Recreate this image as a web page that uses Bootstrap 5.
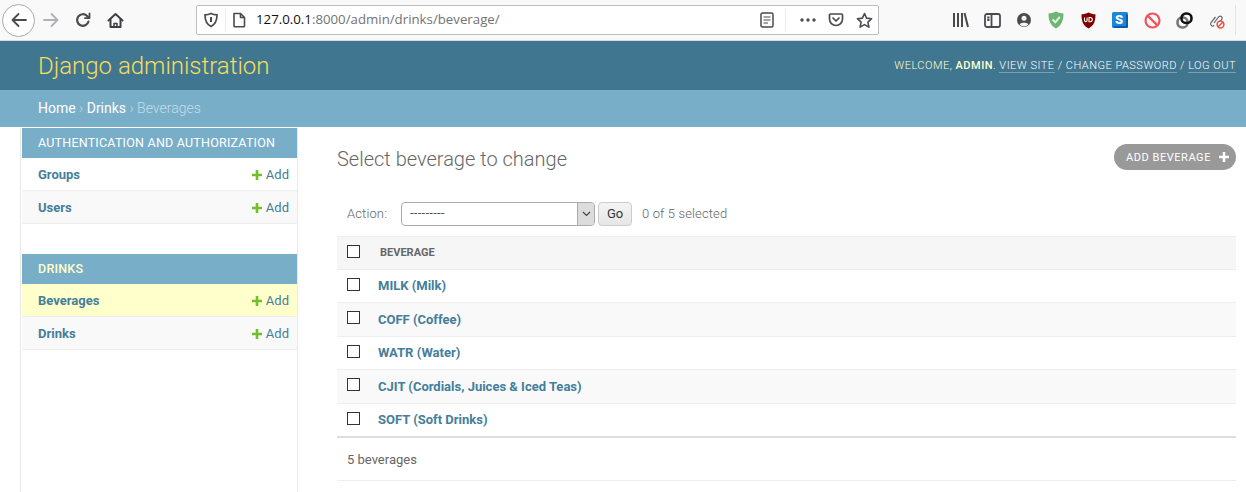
<!DOCTYPE html>
<html lang="en">
<head>
    <meta charset="UTF-8">
    <meta name="viewport" content="width=device-width, initial-scale=1.0">
    <title>Select beverage to change | Django site admin</title>
    <link href="https://cdn.jsdelivr.net/npm/bootstrap@5.3.0/dist/css/bootstrap.min.css" rel="stylesheet">
    <style>
        html, body { height: 100%; }
        body {
            font-family: Roboto, "Liberation Sans", sans-serif;
            font-size: 14px;
            color: #333;
            background: #fff;
            overflow: hidden;
        }
        a { text-decoration: none; color: #447e9b; }

        /* browser chrome */
        .browser-bar { height: 41px; background: #f9f9fa; border-bottom: 1px solid #d8d8da; padding-left: 2px; }
        .tool-slot { width: 32px; height: 32px; flex: none; }
        .back-ring { width: 33px; height: 33px; border: 1px solid #a9a9ab; border-radius: 50%; background: #fff; }
        .url-box {
            width: 683px; height: 30px; margin-left: 65px; background: #fff;
            border: 1px solid #bdbdbf; border-radius: 2px; font-family: "Open Sans", sans-serif;
            font-size: 13.25px; color: #737373;
        }
        .url-box b { font-weight: 400; color: #111; }
        .url-text { margin-left: 4px; }
        .url-sep { width: 1px; height: 22px; background: #ececee; flex: none; }
        .url-slot { width: 28px; height: 28px; flex: none; }
        .page-slot { width: 26px; }
        .url-sep-end { margin: 0 8px 0 4px; }
        .ext-strip { margin-left: 65px; }
        .ext-end { width: 1px; height: 30px; background: #e4e4e6; margin-left: 3px; }

        /* django header */
        .site-head { height: 49px; background: #417690; padding: 0 10px 0 38px; }
        .site-name { font-size: 24px; font-weight: 300; color: #f5dd5d; }
        .user-tools { font-size: 11px; letter-spacing: .5px; color: #ffc; text-transform: uppercase; font-weight: 300; padding-top: 1px; }
        .user-tools strong { font-weight: 500; }
        .user-tools a { color: #fff; border-bottom: 1px solid rgba(255,255,255,.3); font-weight: 300; }
        .crumb-bar { height: 38px; background: #79aec8; padding-left: 38px; font-size: 14px; font-weight: 300; color: #c4dce8; border-bottom: 1px solid #fff; }
        .crumb-bar a { color: #fff; font-weight: 400; }

        /* sidebar */
        .main-wrap { height: calc(100% - 128px); }
        .side-nav { width: 278px; margin-left: 20px; flex: none; border-left: 1px solid #eaeaea; border-right: 1px solid #eaeaea; padding-left: 1px; }
        .mod-head { height: 30px; background: #79aec8; color: #fff; font-size: 12.5px; letter-spacing: .22px; padding-left: 16px; font-weight: 400; }
        .mod-gap { margin-top: 30px; }
        .mod-head-tall { font-weight: 500; color: #ffc; }
        .mod-row { height: 33px; padding: 1px 8px 0 16px; border-bottom: 1px solid #eee; font-size: 13px; font-weight: 700; }
        .mod-row.alt { background: #f9f9f9; }
        .mod-row.current { background: #ffc; }
        .add-link { font-weight: 400; font-size: 13px; display: inline-flex; align-items: center; gap: 4px; }

        /* changelist */
        .change-pane { padding: 0 10px 0 39px; min-width: 0; }
        .title-row { height: 71px; padding-top: 16px; }
        .page-title { font-size: 20px; font-weight: 300; color: #666; margin: 0; line-height: 30px; }
        .add-pill {
            width: 122px; height: 26px; border-radius: 13px; background: #999; color: #fff;
            font-size: 11px; letter-spacing: .55px; padding-left: 12px;
        }
        .pill-label { padding-top: 3px; }
        .action-row { height: 34px; margin-top: 3px; padding-left: 10px; color: #666; font-size: 13px; font-weight: 300; letter-spacing: .13px; }
        .action-note { padding-top: 2px; }
        .action-pick {
            width: 194px; height: 24px; margin-left: 14px; border: 1px solid #aaa; border-radius: 4px;
            background: #fff; color: #000; padding-left: 8px; overflow: hidden; font-size: 13px;
        }
        .pick-arrow { width: 17px; height: 22px; margin-left: auto; background: #dcdcdc; border-left: 1px solid #aaa; }
        .go-btn { height: 24px; width: 34px; margin-left: 3px; border: 1px solid #ccc; border-radius: 4px; background: linear-gradient(#f4f4f4, #e6e6e6); color: #333; font-size: 13px; font-weight: 400; }
        .sel-count { margin-left: 10px; color: #666; }

        .bev-table { margin: 0; border-top: 1px solid #eee; border-bottom: 2px solid #ddd; font-size: 13px; }
        .bev-table th, .bev-table td { padding: 0; height: 33.5px; vertical-align: middle; border-bottom: 1px solid #eee; background: transparent; box-shadow: none; }
        .bev-table thead th { height: 32.5px; background: #f6f6f6; color: #666; font-size: 11px; font-weight: 700; }
        .bev-table tr.alt td { background: #f9f9f9; }
        .bev-table tr:last-child td { border-bottom: 0; }
        .bev-table td a { font-weight: 700; }
        .check-cell { width: 41px; padding-left: 10px !important; }
        .tick-box { display: block; width: 13px; height: 13px; border: 1px solid #333; background: #fff; margin-top: -3px; }
        .head-label { padding-left: 2px !important; }
        .paginator-row { height: 43px; color: #666; font-size: 13px; padding: 2px 0 0 10px; border-bottom: 1px solid #eee; }
    </style>
</head>
<body>
    <!-- browser toolbar -->
    <div class="browser-bar d-flex align-items-center">
        <div class="tool-slot back-ring d-flex align-items-center justify-content-center">
            <svg width="18" height="18" viewBox="0 0 18 18" fill="none" stroke="#4a4a4f" stroke-width="1.8" stroke-linecap="round" stroke-linejoin="round"><path d="M16 9H2.500M8.500 3 2.500 9l6 6"/></svg>
        </div>
        <div class="tool-slot d-flex align-items-center justify-content-center">
            <svg width="18" height="18" viewBox="0 0 18 18" fill="none" stroke="#b1b1b3" stroke-width="1.8" stroke-linecap="round" stroke-linejoin="round"><path d="M2 9h13.500M9.500 3l6 6-6 6"/></svg>
        </div>
        <div class="tool-slot d-flex align-items-center justify-content-center">
            <svg width="18" height="18" viewBox="0 0 18 18" fill="none" stroke="#4a4a4f" stroke-width="2.200" stroke-linecap="round" stroke-linejoin="round"><path d="M14.500 10.500A5.800 5.800 0 1 1 12.800 4.700L15 6.800"/><path d="M15.500 2.500v4.600h-4.600" stroke-width="1.800"/></svg>
        </div>
        <div class="tool-slot d-flex align-items-center justify-content-center">
            <svg width="17" height="17" viewBox="0 0 17 17" fill="none" stroke="#3f3f44" stroke-width="2" stroke-linejoin="round" stroke-linecap="round"><path d="M1.500 8.500 8.500 2l7 6.500"/><path d="M3.500 7.500v7.500h10V7.500"/><path d="M7 15v-3.500h3V15" stroke-width="1.500"/></svg>
        </div>

        <div class="url-box d-flex align-items-center">
            <div class="url-slot d-flex align-items-center justify-content-center">
                <svg width="16" height="16" viewBox="0 0 16 16" fill="none" stroke="#4a4a4f" stroke-width="1.700"><path d="M8 1.500c2 1 4 1.300 6 1.300 0 5.500-1.500 9.500-6 11.700C3.500 12.300 2 8.300 2 2.800c2 0 4-.3 6-1.300z"/><path d="M8 5v5" stroke-width="2"/></svg>
            </div>
            <div class="url-sep"></div>
            <div class="url-slot page-slot d-flex align-items-center justify-content-center">
                <svg width="16" height="16" viewBox="0 0 16 16" fill="none" stroke="#4a4a4f" stroke-width="1.600" stroke-linejoin="round"><path d="M3 1.500h6.500l4 4V14a.8.8 0 0 1-.8.8H3.800A.8.8 0 0 1 3 14z"/><path d="M9.500 1.500v4h4"/></svg>
            </div>
            <span class="url-text"><b>127.0.0.1</b>:8000/admin/drinks/beverage/</span>
            <div class="url-slot d-flex align-items-center justify-content-center ms-auto">
                <svg width="14" height="16" viewBox="0 0 14 16" fill="none" stroke="#4a4a4f" stroke-width="1.500"><rect x="1" y="1" width="12" height="14" rx="1.500"/><path d="M3.500 5h7M3.500 8h7M3.500 11h4.500" stroke-width="1.200"/></svg>
            </div>
            <div class="url-sep url-sep-end"></div>
            <div class="url-slot d-flex align-items-center justify-content-center">
                <svg width="16" height="4" viewBox="0 0 16 4" fill="#4a4a4f"><circle cx="2" cy="2" r="1.700"/><circle cx="8" cy="2" r="1.700"/><circle cx="14" cy="2" r="1.700"/></svg>
            </div>
            <div class="url-slot d-flex align-items-center justify-content-center">
                <svg width="16" height="16" viewBox="0 0 16 16" fill="none" stroke="#4a4a4f" stroke-width="1.700" stroke-linecap="round" stroke-linejoin="round"><path d="M2.500 2h11A1 1 0 0 1 14.500 3v4a6.500 6.500 0 0 1-13 0V3a1 1 0 0 1 1-1z"/><path d="M5 6l3 3 3-3"/></svg>
            </div>
            <div class="url-slot d-flex align-items-center justify-content-center">
                <svg width="17" height="17" viewBox="0 0 17 17" fill="none" stroke="#4a4a4f" stroke-width="1.600" stroke-linejoin="round"><path d="M8.500 1.500l2.100 4.600 5 .6-3.700 3.400 1 5-4.400-2.500-4.400 2.500 1-5L1.400 6.700l5-.6z"/></svg>
            </div>
        </div>

        <div class="ext-strip d-flex align-items-center">
            <div class="tool-slot d-flex align-items-center justify-content-center">
                <svg width="17" height="16" viewBox="0 0 17 16" fill="none" stroke="#4a4a4f" stroke-width="2"><path d="M2 1v14M6 1v14M10 1v14M12.500 1l3.500 14"/></svg>
            </div>
            <div class="tool-slot d-flex align-items-center justify-content-center">
                <svg width="17" height="15" viewBox="0 0 17 15" fill="none" stroke="#4a4a4f" stroke-width="1.800"><rect x="1" y="1" width="15" height="13" rx="2"/><path d="M7.500 1v13M3.200 4.500h2.300M3.200 7h2.300"/></svg>
            </div>
            <div class="tool-slot d-flex align-items-center justify-content-center">
                <svg width="16" height="16" viewBox="0 0 16 16"><circle cx="8" cy="8" r="7" fill="#4a4a4f"/><circle cx="8" cy="6.300" r="2.500" fill="#f9f9fa"/><path d="M3.500 12.500c1-2.500 8-2.500 9 0A6 6 0 0 1 3.500 12.500z" fill="#f9f9fa"/></svg>
            </div>
            <div class="tool-slot d-flex align-items-center justify-content-center">
                <svg width="16" height="18" viewBox="0 0 16 18"><path d="M8 .5c2.500 1.300 5 2 7.500 2 0 7-2 12-7.500 15C2.500 14.500.5 9.500.5 2.500 3 2.500 5.500 1.800 8 .5z" fill="#6fb673"/><path d="M4.500 8.500 7.300 11.300 11.800 5.800" fill="none" stroke="#e4f3e4" stroke-width="2"/></svg>
            </div>
            <div class="tool-slot d-flex align-items-center justify-content-center">
                <svg width="15" height="17" viewBox="0 0 15 17"><path d="M7.500 .5c2.300 1.200 4.500 1.800 7 1.800 0 7-1.500 11.500-7 14.200C2 13.800.5 9.300.5 2.300c2.500 0 4.700-.6 7-1.800z" fill="#800000"/><path d="M3.500 5.500v2.800a1.300 1.300 0 0 0 2.600 0V5.500M8 5.500v4.200h1.200a2.100 2.100 0 0 0 0-4.200z" fill="none" stroke="#fff" stroke-width="1.100"/></svg>
            </div>
            <div class="tool-slot d-flex align-items-center justify-content-center">
                <svg width="16" height="16" viewBox="0 0 16 16"><rect x="0" y="0" width="16" height="16" rx="1.500" fill="#1a87dc"/><path d="M16 3v11.500a1.500 1.500 0 0 1-1.500 1.500H3l-2-2h13V2z" fill="#0a5ba8"/><text x="7" y="12" font-family="Roboto, sans-serif" font-size="13" font-weight="900" fill="#fff" text-anchor="middle">S</text></svg>
            </div>
            <div class="tool-slot d-flex align-items-center justify-content-center">
                <svg width="17" height="17" viewBox="0 0 17 17" fill="none" stroke="#f0535a" stroke-width="2.200"><circle cx="8.500" cy="8.500" r="7"/><path d="M3.600 3.600l9.800 9.800"/></svg>
            </div>
            <div class="tool-slot d-flex align-items-center justify-content-center">
                <svg width="17" height="17" viewBox="0 0 17 17" fill="none" stroke-width="2.600"><rect x="1.500" y="5.500" width="10" height="10" rx="4.500" stroke="#77777a"/><rect x="5.500" y="1.500" width="10" height="9.500" rx="4.500" stroke="#111"/></svg>
            </div>
            <div class="tool-slot d-flex align-items-center justify-content-center">
                <svg width="17" height="17" viewBox="0 0 17 17" fill="none"><path d="M6 11l5-6.500a2 2 0 0 1 3 2.400L12.500 9M7.500 5 3 10.500a2.300 2.300 0 0 0 3.300 3.100" stroke="#66666a" stroke-width="1.200"/><circle cx="12.500" cy="12.500" r="3.400" fill="#fff" stroke="#e0523f" stroke-width="1.500"/><path d="M10.200 14.800l4.600-4.600" stroke="#e0523f" stroke-width="1.500"/></svg>
            </div>
            <div class="ext-end"></div>
        </div>
    </div>

    <!-- admin header -->
    <div class="site-head d-flex align-items-center justify-content-between">
        <div class="site-name">Django administration</div>
        <div class="user-tools">Welcome, <strong>admin</strong>. <a href="#">View site</a> / <a href="#">Change password</a> / <a href="#">Log out</a></div>
    </div>
    <div class="crumb-bar d-flex align-items-center">
        <span><a href="#">Home</a> › <a href="#">Drinks</a> › Beverages</span>
    </div>

    <div class="main-wrap d-flex">
        <div class="side-nav">
            <div class="mod-head d-flex align-items-center">AUTHENTICATION AND AUTHORIZATION</div>
            <div class="mod-row d-flex align-items-center justify-content-between">
                <a href="#">Groups</a>
                <a href="#" class="add-link"><svg width="10" height="10" viewBox="0 0 10 10"><path d="M3.700 0h2.600v3.700H10v2.600H6.300V10H3.700V6.300H0V3.700h3.700z" fill="#70bf2b"/></svg>Add</a>
            </div>
            <div class="mod-row alt d-flex align-items-center justify-content-between">
                <a href="#">Users</a>
                <a href="#" class="add-link"><svg width="10" height="10" viewBox="0 0 10 10"><path d="M3.700 0h2.600v3.700H10v2.600H6.300V10H3.700V6.300H0V3.700h3.700z" fill="#70bf2b"/></svg>Add</a>
            </div>
            <div class="mod-head mod-head-tall mod-gap d-flex align-items-center">DRINKS</div>
            <div class="mod-row current d-flex align-items-center justify-content-between">
                <a href="#">Beverages</a>
                <a href="#" class="add-link"><svg width="10" height="10" viewBox="0 0 10 10"><path d="M3.700 0h2.600v3.700H10v2.600H6.300V10H3.700V6.300H0V3.700h3.700z" fill="#70bf2b"/></svg>Add</a>
            </div>
            <div class="mod-row alt d-flex align-items-center justify-content-between">
                <a href="#">Drinks</a>
                <a href="#" class="add-link"><svg width="10" height="10" viewBox="0 0 10 10"><path d="M3.700 0h2.600v3.700H10v2.600H6.300V10H3.700V6.300H0V3.700h3.700z" fill="#70bf2b"/></svg>Add</a>
            </div>
        </div>

        <div class="change-pane flex-grow-1">
            <div class="title-row d-flex justify-content-between align-items-start">
                <h1 class="page-title">Select beverage to change</h1>
                <a href="#" class="add-pill d-flex align-items-center gap-1"><span class="pill-label">ADD BEVERAGE</span> <svg class="ms-1" width="10" height="10" viewBox="0 0 10 10"><path d="M3.700 0h2.600v3.700H10v2.600H6.300V10H3.700V6.300H0V3.700h3.700z" fill="#fff"/></svg></a>
            </div>
            <div class="action-row d-flex align-items-start">
                <span class="action-note">Action:</span>
                <div class="action-pick d-flex align-items-center">
                    <span>---------</span>
                    <div class="pick-arrow d-flex align-items-center justify-content-center">
                        <svg width="9" height="6" viewBox="0 0 9 6" fill="none" stroke="#444" stroke-width="1.200"><path d="M1 1l3.500 3.500L8 1"/></svg>
                    </div>
                </div>
                <button class="go-btn p-0" type="button">Go</button>
                <span class="sel-count action-note">0 of 5 selected</span>
            </div>
            <table class="table bev-table">
                <thead>
                    <tr>
                        <th class="check-cell"><span class="tick-box"></span></th>
                        <th class="head-label">BEVERAGE</th>
                    </tr>
                </thead>
                <tbody>
                    <tr><td class="check-cell"><span class="tick-box"></span></td><td><a href="#">MILK (Milk)</a></td></tr>
                    <tr class="alt"><td class="check-cell"><span class="tick-box"></span></td><td><a href="#">COFF (Coffee)</a></td></tr>
                    <tr><td class="check-cell"><span class="tick-box"></span></td><td><a href="#">WATR (Water)</a></td></tr>
                    <tr class="alt"><td class="check-cell"><span class="tick-box"></span></td><td><a href="#">CJIT (Cordials, Juices &amp; Iced Teas)</a></td></tr>
                    <tr><td class="check-cell"><span class="tick-box"></span></td><td><a href="#">SOFT (Soft Drinks)</a></td></tr>
                </tbody>
            </table>
            <div class="paginator-row d-flex align-items-center">5 beverages</div>
        </div>
    </div>

    <script src="https://cdn.jsdelivr.net/npm/bootstrap@5.3.0/dist/js/bootstrap.bundle.min.js"></script>
</body>
</html>
